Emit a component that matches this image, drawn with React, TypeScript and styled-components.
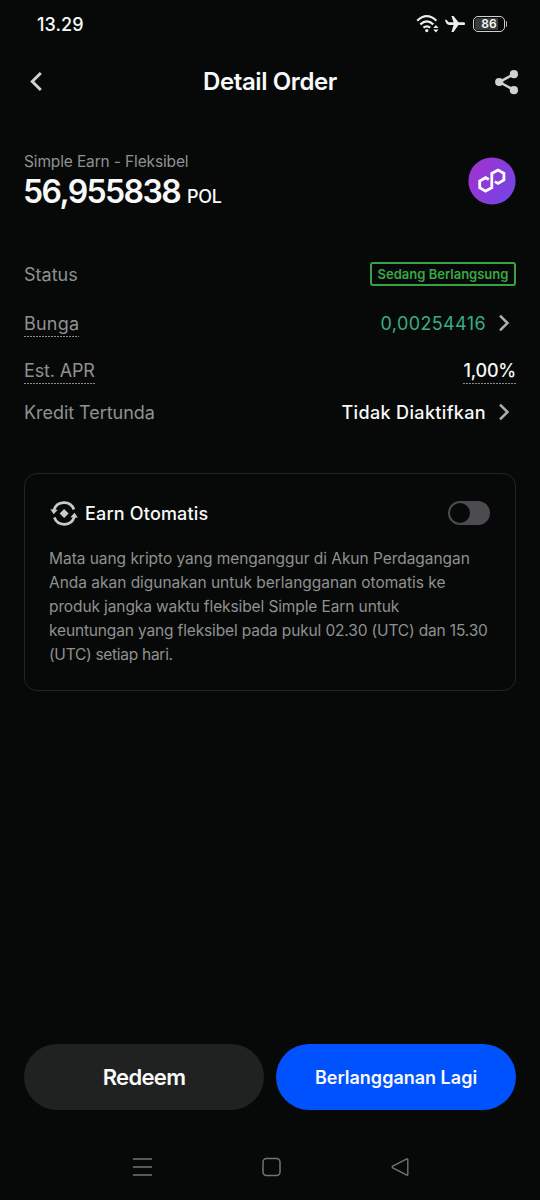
import React from "react";
import styled, { createGlobalStyle } from "styled-components";

const GlobalStyle = createGlobalStyle`
  *, *::before, *::after { box-sizing: border-box; }
  body { margin: 0; background: #070908; }
  button { font: inherit; }
`;

const Screen = styled.div`
  display: flex;
  flex-direction: column;
  width: 540px;
  height: 1200px;
  background: #070908;
  color: #f8f9f8;
  font-family: Inter, "Liberation Sans", sans-serif;
`;

const StatusBar = styled.header`
  display: flex;
  align-items: center;
  justify-content: space-between;
  height: 48px;
  padding: 0 33px 0 37px;
`;

const StatusIcons = styled.div`
  display: flex;
  align-items: center;
  gap: 5px;
  color: #eceeed;
  svg { display: block; }
`;

const Label = styled.span<{
  $size: number;
  $weight?: number;
  $spacing?: number;
  $color?: string;
}>`
  font-size: ${(p) => p.$size}px;
  font-weight: ${(p) => p.$weight ?? 400};
  letter-spacing: ${(p) => p.$spacing ?? 0}px;
  color: ${(p) => p.$color ?? "#f8f9f8"};
  line-height: 1.2;
  white-space: nowrap;
  padding-top: 2px;
`;

const TitleBar = styled.div`
  display: grid;
  grid-template-columns: 60px 1fr 60px;
  align-items: center;
  justify-items: center;
  height: 68px;
  padding: 0 21px 0 12px;
`;

const Title = styled(Label)`
  margin: 0 0 0 9px;
  padding-top: 1px;
`;

const IconButton = styled.button<{ $align: "start" | "end" }>`
  display: flex;
  justify-self: ${(p) => p.$align};
  padding: 0;
  border: 0;
  background: none;
  color: #d0d2d1;
`;

const Summary = styled.section`
  display: flex;
  align-items: center;
  justify-content: space-between;
  height: 64px;
  margin-top: 33px;
  padding: 0 24px;
`;

const SummaryText = styled.div`
  display: flex;
  flex-direction: column;
  height: 64px;
  padding-top: 2px;
`;

const Amount = styled.div`
  display: flex;
  align-items: baseline;
  gap: 7px;
  margin: -1px 0 0 -1px;
`;

const Details = styled.dl`
  margin: 36px 0 0;
  padding: 0 24px;
`;

const DetailRow = styled.div<{ $height: number }>`
  display: flex;
  align-items: center;
  justify-content: space-between;
  height: ${(p) => p.$height}px;
`;

const Term = styled.dt`
  display: flex;
`;

const Value = styled.dd`
  display: flex;
  align-items: center;
  gap: 12px;
  margin: 0;
  svg { display: block; margin-right: 6px; }
`;

const Hint = styled(Label)`
  padding: 1px 0 3px;
  margin-top: 3px;
  background: repeating-linear-gradient(90deg, #8b8d8c 0 2px, transparent 2px 3px)
    left bottom / 100% 1px no-repeat;
`;

const Badge = styled.span`
  display: flex;
  align-items: center;
  justify-content: center;
  width: 146px;
  height: 24px;
  border: 2px solid #35a343;
  border-radius: 3px;
`;

const Card = styled.section`
  height: 218px;
  margin: 42px 24px 0;
  padding: 24px 25px 0 24px;
  border: 1.5px solid #232525;
  border-radius: 13px;
`;

const CardHeader = styled.div`
  display: flex;
  align-items: center;
  height: 30px;
  gap: 7px;
  svg { display: block; }
`;

const Toggle = styled.button`
  width: 42px;
  height: 24px;
  margin-left: auto;
  padding: 2px;
  border: 0;
  border-radius: 12px;
  background: #4b4b50;
`;

const Knob = styled.span`
  display: block;
  width: 20px;
  height: 20px;
  border-radius: 50%;
  background: #070908;
`;

const Description = styled.p`
  display: flex;
  flex-direction: column;
  margin: 19px 0 0;
`;

const DescriptionLine = styled(Label)`
  line-height: 24px;
  padding: 0;
`;

const Actions = styled.div`
  display: flex;
  gap: 12px;
  margin-top: auto;
  padding: 0 24px;
`;

const ActionButton = styled.button<{ $primary?: boolean }>`
  display: flex;
  flex: 1;
  align-items: center;
  justify-content: center;
  height: 66px;
  padding: 0;
  border: 0;
  border-radius: 33px;
  background: ${(p) => (p.$primary ? "#0052fe" : "#202221")};
`;

const RedeemLabel = styled(Label)`
  padding: 0;
`;

const SystemNav = styled.nav`
  display: flex;
  align-items: center;
  justify-content: center;
  gap: 108px;
  height: 90px;
  padding: 24px 0 0 3px;
  color: #727473;
`;

const muted = "#8f9190";

const Wifi = () => (
  <svg width="24" height="20" viewBox="0 0 24 20" fill="none" stroke="currentColor" strokeWidth="2.2">
    <path d="M1.2 6.7Q10.8-2.4 20.4 6.7M4.3 10.4Q10.8 4.4 17.3 10.4M7.4 13.7Q10.8 10.9 14.2 13.7" />
    <circle cx="10.8" cy="16.6" r="1.6" fill="currentColor" stroke="none" />
    <path d="M17.3 14l2.6-3 2.6 3zM17.3 15.5l2.6 3 2.6-3z" fill="currentColor" stroke="none" />
  </svg>
);

const Plane = () => (
  <svg width="20" height="18" viewBox="0 0 20 18" fill="currentColor">
    <path d="M0 4.8h1.5l2.1 2.5h5L6.4 1h2.1l5 6.3h4.6c1.8 0 2 1.1 2 1.4s-.2 1.4-2 1.4h-4.6l-5 6.8H6.4l2.2-6.8H4.2C1.8 9.8.7 8.3 0 4.8z" />
  </svg>
);

const BatteryWrap = styled.span`
  display: flex;
  align-items: center;
  margin-left: 3px;
`;

const BatteryBody = styled.span`
  display: flex;
  padding: 1px;
  width: 32px;
  height: 16px;
  border: 1.5px solid #cfd1d0;
  border-radius: 5px;
`;

const BatteryLevel = styled.span`
  display: flex;
  align-items: center;
  justify-content: center;
  width: 28px;
  border-radius: 2.5px;
  background: linear-gradient(90deg, #393b3a 0 23px, transparent 23px);
`;

const BatteryText = styled(Label)`
  padding: 0;
`;

const BatteryTip = styled.span`
  width: 1.5px;
  height: 6px;
  margin-left: 0.5px;
  border-radius: 0 2px 2px 0;
  background: #b5b7b6;
`;

const Chevron = () => (
  <svg width="12" height="18" viewBox="0 0 12 18" fill="none" stroke="#adafae" strokeWidth="2.5">
    <path d="M2 1.7l7.5 7.3L2 16.3" />
  </svg>
);

const Back = () => (
  <svg width="36" height="24" viewBox="0 0 36 24" fill="none" stroke="currentColor" strokeWidth="3">
    <path d="M28.8 3l-8.5 8.5 8.5 8.5" />
  </svg>
);

const Share = () => (
  <svg width="24" height="26" viewBox="0 0 24 26" fill="currentColor">
    <path d="M19 5L4.5 13 19 21.2" fill="none" stroke="currentColor" strokeWidth="2.5" />
    <circle cx="4.2" cy="13" r="4.1" />
    <circle cx="18.9" cy="5.2" r="4.1" />
    <circle cx="18.9" cy="21.2" r="4.1" />
  </svg>
);

const Polygon = () => (
  <svg width="48" height="48" viewBox="0 0 48 48">
    <defs>
      <linearGradient id="pol" x1="0" y1="0.1" x2="1" y2="0.7">
        <stop offset="0" stopColor="#a331cf" />
        <stop offset="1" stopColor="#7544e4" />
      </linearGradient>
    </defs>
    <circle cx="24" cy="24" r="23.6" fill="url(#pol)" />
    <path
      d="M20.8 22.5L17.6 20.7l-5.9 3.4v6.6l5.9 3.4 6.2-3.4V16.4l6.2-3.4 5.9 3.4V23l-5.9 3.4-3.2-1.8"
      fill="none"
      stroke="#fff"
      strokeWidth="2.8"
    />
  </svg>
);

const AutoEarn = () => (
  <svg width="29" height="28" viewBox="0 0 29 28" fill="#c8cacb">
    <path d="M4.9 11.2a10.6 10.6 0 0 1 20-.8M25.3 17.8a10.6 10.6 0 0 1-20 .8" fill="none" stroke="#c8cacb" strokeWidth="2.7" />
    <path d="M1.4 10.2l7.4.6-4.2 4.5zM28.8 18.8l-7.4-.6 4.2-4.5z" />
    <path d="M15.1 10l4.5 4.5-4.5 4.5-4.5-4.5z" />
  </svg>
);

const lines: [string, number][] = [
  ["Mata uang kripto yang menganggur di Akun Perdagangan", -0.04],
  ["Anda akan digunakan untuk berlangganan otomatis ke", -0.02],
  ["produk jangka waktu fleksibel Simple Earn untuk", -0.11],
  ["keuntungan yang fleksibel pada pukul 02.30 (UTC) dan 15.30", -0.15],
  ["(UTC) setiap hari.", -0.28],
];

export default function App() {
  return (
    <Screen>
      <GlobalStyle />
      <StatusBar>
        <Label $size={18} $weight={500} $spacing={0.1}>13.29</Label>
        <StatusIcons>
          <Wifi />
          <Plane />
          <BatteryWrap>
            <BatteryBody>
              <BatteryLevel>
                <BatteryText $size={12} $weight={600}>86</BatteryText>
              </BatteryLevel>
            </BatteryBody>
            <BatteryTip />
          </BatteryWrap>
        </StatusIcons>
      </StatusBar>

      <TitleBar>
        <IconButton $align="start" aria-label="Kembali"><Back /></IconButton>
        <Title as="h1" $size={24} $weight={600} $spacing={-0.4}>Detail Order</Title>
        <IconButton $align="end" aria-label="Bagikan"><Share /></IconButton>
      </TitleBar>

      <Summary>
        <SummaryText>
          <Label $size={15.5} $spacing={-0.14} $color={muted}>Simple Earn - Fleksibel</Label>
          <Amount>
            <Label $size={32} $weight={600} $spacing={-1.6}>56,955838</Label>
            <Label $size={18} $weight={500} $spacing={-0.3}>POL</Label>
          </Amount>
        </SummaryText>
        <Polygon />
      </Summary>

      <Details>
        <DetailRow $height={50}>
          <Term><Label $size={18} $color={muted}>Status</Label></Term>
          <Value>
            <Badge><Label $size={13} $weight={600} $color="#3aa846">Sedang Berlangsung</Label></Badge>
          </Value>
        </DetailRow>
        <DetailRow $height={48}>
          <Term><Hint $size={18} $spacing={0.2} $color={muted}>Bunga</Hint></Term>
          <Value>
            <Label $size={18} $spacing={0.38} $color="#39ad80">0,00254416</Label>
            <Chevron />
          </Value>
        </DetailRow>
        <DetailRow $height={46}>
          <Term><Hint $size={18} $spacing={-0.15} $color={muted}>Est. APR</Hint></Term>
          <Value><Hint $size={18} $weight={500} $spacing={-0.2}>1,00%</Hint></Value>
        </DetailRow>
        <DetailRow $height={38}>
          <Term><Label $size={18} $spacing={-0.04} $color={muted}>Kredit Tertunda</Label></Term>
          <Value>
            <Label $size={18} $weight={500} $spacing={0.35}>Tidak Diaktifkan</Label>
            <Chevron />
          </Value>
        </DetailRow>
      </Details>

      <Card>
        <CardHeader>
          <AutoEarn />
          <Label as="strong" $size={18} $weight={500} $spacing={0.18}>Earn Otomatis</Label>
          <Toggle role="switch" aria-checked={false} aria-label="Earn Otomatis"><Knob /></Toggle>
        </CardHeader>
        <Description>
          {lines.map(([text, spacing]) => (
            <DescriptionLine key={text} $size={15.5} $spacing={spacing} $color={muted}>
              {text}
            </DescriptionLine>
          ))}
        </Description>
      </Card>

      <Actions>
        <ActionButton><RedeemLabel $size={22} $weight={600} $spacing={-0.65}>Redeem</RedeemLabel></ActionButton>
        <ActionButton $primary><Label $size={18} $weight={600}>Berlangganan Lagi</Label></ActionButton>
      </Actions>

      <SystemNav>
        <svg width="21" height="20" viewBox="0 0 21 20" fill="none" stroke="currentColor" strokeWidth="1.6">
          <path d="M1 2h19M1 10h19M1 18h19" />
        </svg>
        <svg width="21" height="20" viewBox="0 0 21 20" fill="none" stroke="currentColor" strokeWidth="1.5">
          <rect x="2" y="1.5" width="17" height="17" rx="3.5" />
        </svg>
        <svg width="21" height="20" viewBox="0 0 21 20" fill="none" stroke="currentColor" strokeWidth="1.4" strokeLinejoin="round">
          <path d="M17.8 2.8v14.4q0 1.5-1.4.7L2.8 10.8q-1.2-.8 0-1.6L16.4 2.1q1.4-.7 1.4.7z" />
        </svg>
      </SystemNav>
    </Screen>
  );
}
